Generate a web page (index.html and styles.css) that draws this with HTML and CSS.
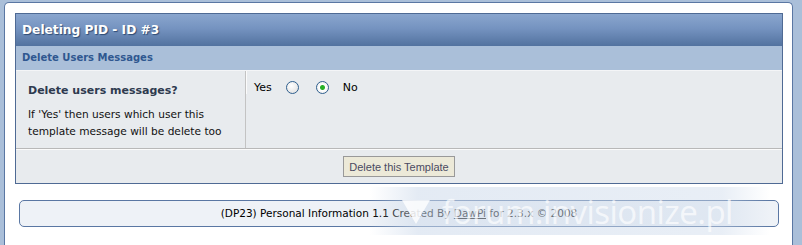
FILE: index.html
```html
<!DOCTYPE html>
<html lang="en">
<head>
    <meta charset="UTF-8">
    <title>Deleting PID - ID #3</title>
    <link rel="stylesheet" href="styles.css">
</head>
<body>
    <div class="wrapper">
        <!-- main form table -->
        <div class="tableborder">
            <div class="maintitle">Deleting PID - ID #3</div>
            <div class="subtitle">Delete Users Messages</div>
            <div class="row">
                <div class="row-left">
                    <div class="question">Delete users messages?</div>
                    <div class="desc">If 'Yes' then users which user this<br>template message will be delete too</div>
                </div>
                <div class="row-right">
                    <label class="opt">Yes</label>
                    <input type="radio" name="del" class="radio">
                    <input type="radio" name="del" class="radio" checked>
                    <label class="opt">No</label>
                </div>
            </div>
            <div class="buttonrow">
                <button class="btn">Delete this Template</button>
            </div>
        </div>

        <!-- copyright -->
        <div class="copyright">(DP23) Personal Information 1.1 Created By <a href="#">DawPi</a> for 2.3.x &copy; 2008</div>

        <!-- watermark -->
        <div class="watermark">
            <span class="wm-logo"></span>
            <span class="wm-text">forum.invisionize.pl</span>
        </div>
    </div>
</body>
</html>
```

FILE: styles.css
```css
body {
    margin: 0;
    background-color: #aabfd9;
    font-family: "DejaVu Sans", Verdana, sans-serif;
    height: 245px;
    overflow: hidden;
}
.wrapper {
    position: relative;
    box-sizing: border-box;
    margin: 2px 9px 0 4px;
    background-color: #fff;
    border: 1px solid #5a77a3;
    border-bottom: none;
    border-radius: 5px 5px 0 0;
    padding: 10px 9px 0 10px;
    height: 243px;
}
.tableborder {
    border: 1px solid #4f6a94;
    background-color: #e8ebee;
}
.maintitle {
    height: 32px;
    line-height: 32px;
    padding-left: 6px;
    background: linear-gradient(to bottom, #8aa6ce 0%, #7593c0 45%, #52729f 100%);
    color: #fff;
    font-size: 12.2px;
    font-weight: bold;
    text-shadow: 1px 1px 1px #2e4a73;
}
.subtitle {
    height: 24px;
    line-height: 24px;
    padding-left: 6px;
    background-color: #aabfd9;
    color: #2f5790;
    font-size: 10px;
    font-weight: bold;
}
.row {
    display: flex;
    border-top: 1px solid #f4f5f7;
    border-bottom: 1px solid #b8b8b8;
    height: 77px;
}
.row-left {
    width: 230px;
    border-right: 1px solid #c3c3c3;
    padding: 13px 0 0 12px;
    box-sizing: border-box;
}
.row-right {
    flex: 1;
    border-left: 1px solid #fbfbfb;
    display: flex;
    align-items: center;
    align-self: flex-start;
    padding: 10px 0 0 7px;
}
.question {
    font-size: 11px;
    font-weight: bold;
    color: #2e3a4f;
}
.desc {
    margin-top: 9px;
    font-size: 10.6px;
    line-height: 17px;
    color: #111;
}
.opt {
    font-size: 11px;
    color: #000;
}
.radio {
    -webkit-appearance: none;
    appearance: none;
    width: 13px;
    height: 13px;
    margin: 0 0 0 14px;
    border: 1px solid #2f5f8e;
    border-radius: 50%;
    background: radial-gradient(circle at 40% 35%, #ffffff 0%, #e6e6e6 70%, #cfcfcf 100%);
    box-sizing: border-box;
}
.radio + .radio {
    margin-left: 17px;
    margin-right: 14px;
}
.radio:checked {
    background: radial-gradient(circle, #27b027 0, #27b027 2px, #ffffff 3px, #e6e6e6 100%);
}
.buttonrow {
    border-top: 1px solid #fbfbfb;
    height: 33px;
    display: flex;
    justify-content: center;
    align-items: center;
}
.btn {
    font-family: "Liberation Sans", Arial, sans-serif;
    font-size: 11px;
    color: #4a4a62;
    background-color: #ece9d8;
    border: 1px solid #999;
    padding: 0 5px;
    height: 21px;
}
.copyright {
    margin: 16px 4px 0 4px;
    height: 25px;
    line-height: 25px;
    background-color: #eef2f7;
    border: 1px solid #5a77a3;
    border-radius: 5px;
    text-align: center;
    font-size: 10.5px;
    color: #000;
}
.copyright a {
    color: #000;
}
.watermark {
    position: absolute;
    left: 365px;
    top: 184px;
    width: 400px;
    height: 48px;
    display: flex;
    align-items: center;
    background: linear-gradient(to right, rgba(205, 218, 235, 0) 0%, rgba(205, 218, 235, 0.55) 12%, rgba(205, 218, 235, 0.45) 88%, rgba(205, 218, 235, 0) 100%);
    pointer-events: none;
}
.wm-logo {
    width: 0;
    height: 0;
    margin-left: 32px;
    margin-top: 2px;
    border-left: 14px solid transparent;
    border-right: 14px solid transparent;
    border-top: 24px solid rgba(255, 255, 255, 0.8);
}
.wm-text {
    margin-left: 12px;
    font-family: "Open Sans", "DejaVu Sans", sans-serif;
    font-size: 33px;
    color: rgba(255, 255, 255, 0.68);
    letter-spacing: -0.5px;
}
```
